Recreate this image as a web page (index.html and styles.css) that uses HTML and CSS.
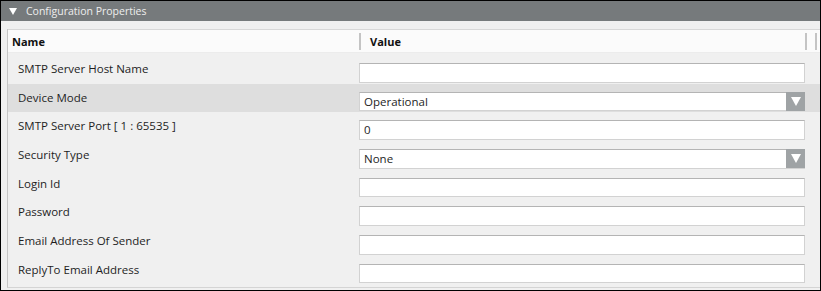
FILE: index.html
```html
<!DOCTYPE html>
<html lang="en">

<head>
    <meta charset="utf-8">
    <title>Configuration Properties</title>
    <link rel="stylesheet" href="styles.css">
</head>

<body>

    <div class="panel">
        <div class="panel-head">
            <span class="caret"></span>
            <span class="title">Configuration Properties</span>
        </div>

        <div class="panel-body">
            <div class="grid">
                <div class="grid-head">
                    <div class="col-name">Name</div>
                    <div class="col-value">Value</div>
                    <div class="col-end"></div>
                </div>

                <div class="row">
                    <div class="label">SMTP Server Host Name</div>
                    <div class="field"><div class="box"></div></div>
                </div>
                <div class="row selected">
                    <div class="label">Device Mode</div>
                    <div class="field"><div class="box select">Operational<span class="arrow"></span></div></div>
                </div>
                <div class="row">
                    <div class="label">SMTP Server Port [ 1 : 65535 ]</div>
                    <div class="field"><div class="box">0</div></div>
                </div>
                <div class="row">
                    <div class="label">Security Type</div>
                    <div class="field"><div class="box select">None<span class="arrow"></span></div></div>
                </div>
                <div class="row">
                    <div class="label">Login Id</div>
                    <div class="field"><div class="box"></div></div>
                </div>
                <div class="row">
                    <div class="label">Password</div>
                    <div class="field"><div class="box"></div></div>
                </div>
                <div class="row">
                    <div class="label">Email Address Of Sender</div>
                    <div class="field"><div class="box"></div></div>
                </div>
                <div class="row">
                    <div class="label">ReplyTo Email Address</div>
                    <div class="field"><div class="box"></div></div>
                </div>
            </div>
        </div>
    </div>

</body></html>
```

FILE: styles.css
```css
body {
    margin: 0;
    background-color: #ffffff;
    font-family: 'Open Sans', 'Noto Sans', sans-serif;
    font-size: 11.5px;
    color: #1e1e1e;
}

.panel {
    box-sizing: border-box;
    width: 821px;
    height: 291px;
    border: 1px solid #000000;
    background-color: #f0f0f0;
    display: flex;
    flex-direction: column;
}

.panel-head {
    height: 20px;
    background-color: #767a7c;
    display: flex;
    align-items: center;
    padding-left: 8px;
    color: #eeeeee;
    font-size: 10.5px;
}

.caret {
    width: 0;
    height: 0;
    border-left: 4px solid transparent;
    border-right: 4px solid transparent;
    border-top: 7px solid #ffffff;
    margin-right: 9px;
}

.panel-body {
    flex: 1;
    padding: 8px 0 2px 6px;
    display: flex;
}

.grid {
    flex: 1;
    border-left: 1px solid #c6c6c6;
    border-bottom: 1px solid #d4d4d4;
}

.grid-head {
    height: 22px;
    border-top: 1px solid #d8d8d8;
    border-bottom: 1px solid #ececec;
    background-color: #fbfbfb;
    display: flex;
    align-items: center;
    font-size: 11px;
    font-weight: bold;
    color: #111111;
    margin-bottom: 2px;
}

.col-name {
    width: 351px;
    padding-left: 4px;
    box-sizing: border-box;
}

.col-value {
    flex: 1;
    height: 17px;
    line-height: 17px;
    border-left: 2px solid #c4c4c4;
    padding-left: 9px;
}

.col-end {
    width: 8px;
    height: 17px;
    border-left: 2px solid #c4c4c4;
    border-right: 2px solid #c4c4c4;
    margin-right: 3px;
}

.row {
    height: 28.7px;
    display: flex;
}

.selected {
    background-color: #dedede;
}

.label {
    width: 351px;
    box-sizing: border-box;
    padding-left: 10px;
    padding-top: 6px;
    line-height: 16px;
}

.field {
    flex: 1;
    padding-right: 15px;
    padding-top: 8px;
}

.box {
    box-sizing: border-box;
    height: 19.5px;
    background-color: #ffffff;
    border: 1px solid #d2d2d2;
    border-top-color: #b4b4b4;
    line-height: 17px;
    padding-left: 4px;
    display: flex;
}

.select {
    border-right: none;
}

.arrow {
    margin-left: auto;
    margin-top: -1px;
    width: 19px;
    height: 19px;
    background-color: #9fa3a5;
    display: flex;
    align-items: center;
    justify-content: center;
}

.arrow::after {
    content: "";
    border-left: 5px solid transparent;
    border-right: 5px solid transparent;
    border-top: 9px solid #ffffff;
}
```
